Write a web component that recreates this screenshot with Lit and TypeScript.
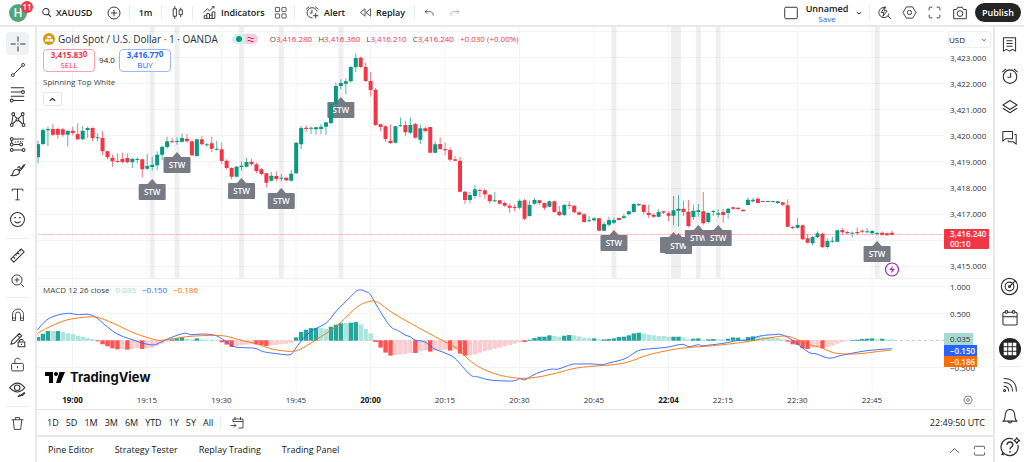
import { LitElement, html, svg, css, nothing } from "lit";
import { customElement, property } from "lit/decorators.js";

/* ---------- icons (28 x 28 grid, line art) ---------- */
const ICONS: Record<string, unknown> = {
  search: svg`<circle cx="12.5" cy="12" r="8" stroke-width="2.6"/><path d="M18.5 18l6.500 7" stroke-width="2.800"/>`,
  plus: svg`<circle cx="14" cy="14" r="10.500"/><path d="M14 8.500v11M8.500 14h11"/>`,
  candles: svg`<path d="M9 2v5M9 21v5M6 7h6v14H6zM20 5v4M20 18v5M17 9h6v9h-6z"/>`,
  indicators: svg`<path d="M4 25v-5h5v-4h5v3h5v-6h5v12zM9 20v5M14 19v6M19 18v7M3 14l7-7 4 4 8-8M19 3h3.500v3.500"/>`,
  grid: svg`<rect x="3" y="3" width="9" height="9" rx="1"/><rect x="17" y="3" width="9" height="9" rx="1"/><rect x="3" y="17" width="9" height="9" rx="1"/><rect x="17" y="17" width="9" height="9" rx="1"/>`,
  alert: svg`<path d="M22.500 12A9.500 9.500 0 1 0 14 24M13 9v6H9M2 8l6-5M19 3l6 5M20 15v10M15 20h10"/>`,
  replay: svg`<path d="M13 6v16L3 14zM25 6v16l-10-8z"/>`,
  undo: svg`<path d="M10 6l-5 5 5 5M5 11h11c5 0 8 3 8 9"/>`,
  redo: svg`<path d="M18 6l5 5-5 5M23 11H12c-5 0-8 3-8 9"/>`,
  frame: svg`<rect x="3" y="4" width="22" height="20" rx="2"/>`,
  down: svg`<path d="M6 11l8 6 8-6" stroke-width="3.500"/>`,
  up: svg`<path d="M4 19l10-9 10 9"/>`,
  fold: svg`<path d="M3 19l11-9 11 9" stroke-width="4.500"/>`,
  quick: svg`<circle cx="13" cy="14" r="9.500" stroke-dasharray="46 14" stroke-dashoffset="-2"/><path d="M20 20l6 6M15 3l-7 11h5l-2 7 8-10h-5z"/>`,
  hex: svg`<path d="M8 3.500h12l6 10.500-6 10.500H8L2 14z"/><circle cx="14" cy="14" r="4"/>`,
  full: svg`<path d="M4 10V6q0-2 2-2h4M18 4h4q2 0 2 2v4M24 18v4q0 2-2 2h-4M10 24H6q-2 0-2-2v-4"/>`,
  camera: svg`<path d="M3 8h5l2-4h8l2 4h5v16H3z"/><circle cx="14" cy="15" r="5"/>`,
  cross: svg`<path d="M14 1v9M14 18v9M1 14h9M18 14h9M13 14h2"/>`,
  trend: svg`<circle cx="5" cy="23" r="2.500"/><circle cx="23" cy="5" r="2.500"/><path d="M7 21L21 7"/>`,
  fib: svg`<path d="M3 3h22M3 10h17M3 17h22M7 24h18"/><circle cx="23" cy="10" r="2.400"/><circle cx="4.500" cy="24" r="2.400"/>`,
  pattern: svg`<path d="M4 23L7 5l7 9 9-9 1 18-10-9z"/><g fill="#fff"><circle cx="4.500" cy="23" r="2.300"/><circle cx="7" cy="5" r="2.300"/><circle cx="14" cy="14" r="2.300"/><circle cx="22.500" cy="5" r="2.300"/><circle cx="24" cy="23" r="2.300"/></g>`,
  forecast: svg`<path d="M7 5h18M7 14h11M7 23h15M4.500 7.500v4"/><path d="M10 10l13-1" stroke-dasharray="2 2"/><g fill="#fff"><circle cx="4.500" cy="5" r="2.300"/><circle cx="4.500" cy="14" r="2.300"/><circle cx="4.500" cy="23" r="2.300"/><circle cx="20" cy="14" r="2.300"/><circle cx="24" cy="23" r="2.300"/></g>`,
  brush: svg`<path d="M3 24c4-1 3-5 5-8 3-4 8-2 9 1 1 5-5 8-14 7zM16 13l2 3c3-2 5-5 9-11M14 12c2-4 4-3 4-1s3 2 6-5"/>`,
  text: svg`<path d="M4 8V4h20v4M14 4v20M10 24h8"/>`,
  smile: svg`<circle cx="14" cy="14" r="11.500"/><path d="M9 17q5 5 10 0"/><path d="M10 10v2M18 10v2" stroke-width="2.500"/>`,
  ruler: svg`<path d="M3 20L20 3l5 5L8 25zM7 16l3 3M11 12l2 2M14 9l3 3M18 5l2 2"/>`,
  zoom: svg`<circle cx="13" cy="13" r="9.500"/><path d="M20 20l6 6M13 8.500v9M8.500 13h9"/>`,
  magnet: svg`<path d="M3 25V13a11 11 0 0 1 22 0v12h-6V13a5 5 0 0 0-10 0v12zM3 20h6M19 20h6"/>`,
  pencilLock: svg`<path d="M3 22l2-6L17 4l4 4L9 20zM14 7l4 4"/><rect x="15" y="18" width="11" height="8"/><path d="M17 18v-2q3.500-4 7 0M20.500 21v2"/>`,
  lock: svg`<rect x="3" y="12" width="22" height="14" rx="2"/><path d="M9 12V7c0-6 8-6 10-2M14 17v4" />`,
  eye: svg`<path d="M1 11q13-15 25 0-12 14-25 0z"/><circle cx="13.500" cy="11" r="4.500"/><path d="M15 26l2-3 3 1zM20 23l5-4 1 1-4 4z"/>`,
  trash: svg`<path d="M3 7h22M10 7V3h8v4M6 7l2 18h12l2-18"/>`,
  list: svg`<path d="M4 3h20v22l-5-3-5 3-5-3-5 3zM9 8h10M9 12.500h10M9 17h10"/>`,
  clock: svg`<circle cx="14" cy="15" r="10.500"/><path d="M15 9v7h-5M2 8l6-5M20 3l6 5"/>`,
  layers: svg`<path d="M14 4l11 7-11 7-11-7zM3 16l11 7 11-7"/>`,
  chat: svg`<path d="M3 4h16v12H8l-5 4zM22 9h3v16l-5-4h-8v-2"/>`,
  radar: svg`<circle cx="14" cy="14" r="12"/><circle cx="14" cy="14" r="6.500"/><path d="M14 14l8-8"/><circle cx="14" cy="14" r="1.500"/>`,
  calendar: svg`<rect x="3" y="5" width="22" height="20" rx="2"/><path d="M3 12h22"/><circle cx="8.500" cy="4.500" r="2" fill="#fff"/><circle cx="19.500" cy="4.500" r="2" fill="#fff"/>`,
  apps: svg`<circle cx="14" cy="14" r="14" fill="#242424" stroke="none"/><path d="M6 6h4.500v4.500H6zM11.750 6h4.500v4.500h-4.500zM17.500 6H22v4.500h-4.500zM6 11.750h4.500v4.500H6zM11.750 11.750h4.500v4.500h-4.500zM17.500 11.750H22v4.500h-4.500zM6 17.500h4.500V22H6zM11.750 17.500h4.500V22h-4.500zM17.500 17.500H22V22h-4.500z" fill="#fff" stroke="none"/>`,
  feed: svg`<circle cx="5.500" cy="22.500" r="1.500"/><path d="M4 16q8 0 8 8M4 10q14 0 14 14M4 4q20 0 20 20"/>`,
  bell: svg`<path d="M3 22c4-2 3-8 4-12 2-8 12-8 14 0 1 4 0 10 4 12zM11 23q3 4 6 0"/>`,
  help: svg`<path d="M25 11a12 12 0 1 1-7-8"/><path d="M2 25l2.500-2.500M3 21.500l2 4"/><path d="M10 11c0-5.500 8-5.500 8 0 0 3-4 3-4 6M14 19.500v2.500" stroke-width="2"/><path d="M23.500 1l1.500 2.500L27.500 5 25 6.500 23.500 9 22 6.500 19.500 5 22 3.500z" fill="#fff"/>`,
  goto: svg`<path d="M6 12V6h20v18h-9M6 11h20M10 2v6M21 2v6M1 19h11M8 15l4 4-4 4"/>`,
  panel: svg`<path d="M3 11V7q0-2 2-2h18q2 0 2 2v4M25 18v4q0 2-2 2H5q-2 0-2-2v-4"/>`,
};

@customElement("tv-icon")
export class TvIcon extends LitElement {
  @property() name = "";
  @property({ type: Number }) size = 16;
  static styles = css`
    :host { display: inline-flex; flex: none; }
    svg { display: block; overflow: visible; }
  `;
  render() {
    return html`<svg width=${this.size} height=${this.size} viewBox="0 0 28 28" fill="none"
      stroke="currentColor" stroke-width="1.700" stroke-linejoin="round" aria-hidden="true">${ICONS[this.name]}</svg>`;
  }
}

/* ---------- chart data ---------- */
// Heights are kept in thirds of a pixel: body top, body bottom, wick top, wick bottom.
type Run = { base: number; bars: string };
const CANDLES: Run[] = [
  { base: 330, bars: `g102,142,92,160 g60,102,55,106 g57,61,50,108 r57,74,42,78 r57,74,53,86 r58,74,54,80 g62,74,62,110
    r62,69,50,76 r72,88,40,90 g62,88,48,90 g54,60,50,84 r54,84,52,94 g82,84,70,94 r84,124,64,136 r124,142,122,148 r143,154,134,170
    r153,155,130,158 r147,156,128,160 r144,157,130,160 g147,157,144,174 g147,150,142,160 r148,178,146,203 g168,176,132,180
    g164,171,140,182 g134,166,124,180 g110,134,108,150 g94,111,80,116 r94,96,84,98 g93,96,82,104 g84,95,70,98 r86,94,72,98
    r94,136,92,138 g88,138,86,140 r88,103,78,106 g103,105,98,110 r100,116,80,126 g116,119,92,122 r118,153,98,162 r152,174,148,178
    r174,200,172,208` },
  { base: 150, bars: `g350,380,348,382 g347,351,335,362 g336,350,324,352 r335,343,326,346 r343,363,338,370 r358,372,354,376
    r370,398,368,412 g377,392,366,394 r378,387,364,394 g383,386,372,394 r383,391,382,394 g371,392,360,394 g278,370,276,372
    g234,283,228,298 r233,237,226,246 g233,236,230,252 g232,238,230,254 g230,237,222,252 g217,230,216,254 g162,219,158,222
    g108,162,98,170 g99,108,88,118 g94,101,86,132 g51,94,48,98 g24,52,10,66 r23,51,20,54 r51,93,38,96 r93,120,66,140
    r119,225,114,228 r223,231,222,244 r229,267,226,276 r272,279,224,282 g229,278,228,280 g226,228,202,230 r225,247,212,258
    g225,248,202,252 r222,263,218,266 g235,269,224,282 r235,243,230,246 r231,308,230,309 g283,308,274,309 r282,297,262,300
    r297,301,278,316 r300,329,292,334 r328,332,318,334 r332,425,320,427` },
  { base: 480, bars: `r95,120,92,132 g105,120,96,130 g88,108,74,116 r90,93,86,112 r91,103,86,116 r104,124,102,132 g121,123,96,126
    r121,131,120,133 r129,137,124,140 r137,143,130,158 r141,143,134,154 g122,143,118,148 r121,176,116,180 g135,168,122,170
    g120,131,114,134 r121,129,120,134 r129,143,128,150 g124,140,122,142 r124,156,122,158 r155,166,138,168 g135,165,132,168
    r134,136,124,148 r137,157,134,160 r157,164,154,166 r163,186,160,188 g181,184,168,186 g175,181,172,184 r175,212,174,214
    g192,212,186,214 g180,194,170,200 g180,188,172,192 r174,180,172,182 g169,174,162,176 g154,163,152,166 g132,156,130,158
    g132,136,130,138 r134,156,134,162 r158,165,134,174 r164,170,160,174 g156,170,148,172 r154,158,152,162` },
  { base: 510, bars: `r130,137,124,154 g121,137,78,166 g116,122,76,170 r116,126,92,138 r125,168,90,172 g122,141,104,150
    g121,126,102,140 r124,160,66,164 g129,156,126,160 g123,126,120,138 g130,134,118,142 r126,135,116,158 g116,129,114,146
    r112,116,110,120 r113,117,112,120 r119,124,118,124 g89,105,82,106 g89,94,84,98 r86,99,82,100 r93,95,92,96 g93,95,92,96
    g93,96,92,97 g94,99,92,102 r97,104,96,108 r106,170,88,172 r171,173,168,178 g165,173,144,176 r166,208,164,210
    r205,218,192,220 g201,220,198,226 g190,202,184,204 r191,231,188,234 g213,231,206,236 g212,215,200,218 g181,215,180,217
    r180,187,174,196 r186,190,182,194 g188,190,184,202 r186,190,172,194 r182,185,178,190 g184,186,174,190 g183,190,180,194
    g189,191,186,196 r188,194,184,198 r190,196,188,197 r188,194,182,196` },
];
// Histogram heights; a trailing "l" marks a fading bar.
const HIST = `11 21 29 29l 29 26l 22l 20l 15l 12l 8l 5l -3 -12 -18 -24 -27 -27l -28 -26l -24l -26 -24l -22l -16l -10l -4l 4 7 10 6l 4l 7
  4l 3l 3l 2l -6 -13 -20 -17l -14l -13l -12l -12 -14 -17 -15l -14l -12l -10l -8l 10 26 33 38 38 38l 36l 42 48 52 53l 54 56 49l 36l 22l
  -5 -22 -37 -46 -44l -42l -41l -38l -38 -33l -30l -34 -31l -30l -28l -31 -28l -40 -46 -45l -42l -37l -33l -29l -25l -22l -18l -14l
  -10l -6l -5 3 8 12 12 16 14l 12l 15 17 16l 13l 9l 8l 7 4l 4 5 7 11 12 16 22 24 22l 18l 16l 14l 14l 12l 12 12 10l 4l 6 7 3l 4 5 4l
  4l 6 10 9 5l 11 13 12l 12l 11l 10l 8l 4l -4 -12 -14 -24 -26 -22l -20l -24 -20l -16l -10l -5l -2l 2 3 5 6 7 4l 6 4l 4l`;
const MACD = `112,990 140,960 170,946 205,940 235,944 265,943 288,952 315,975 345,998 370,1010 400,1020 430,1030 460,1035 480,1028
  505,1016 540,1003 558,1000 575,1004 610,1002 645,1006 665,1016 700,1039 730,1043 765,1045 790,1055 830,1061 870,1064 885,1048
  910,1015 940,990 980,968 1010,932 1050,892 1075,870 1100,876 1112,885 1135,925 1170,978 1195,992 1215,1005 1230,1010 1245,1020
  1275,1026 1300,1045 1335,1059 1365,1075 1410,1124 1435,1131 1470,1140 1520,1143 1545,1142 1560,1136 1575,1139 1610,1120
  1650,1108 1675,1107 1715,1093 1740,1092 1780,1092 1805,1094 1830,1088 1875,1076 1915,1052 1955,1046 2000,1042 2045,1033
  2068,1040 2095,1034 2110,1037 2170,1030 2210,1022 2240,1020 2280,1008 2320,1004 2345,1004 2380,1022 2425,1056 2450,1062
  2475,1072 2495,1074 2525,1066 2565,1058 2610,1051 2675,1046`;
const SIGNAL = `112,1000 150,980 200,960 260,951 295,953 340,970 400,998 450,1015 480,1021 520,1016 570,1009 640,1006 680,1009
  720,1020 770,1032 820,1048 870,1054 900,1048 950,1018 1010,978 1070,922 1110,904 1135,908 1180,940 1250,980 1320,1018
  1370,1045 1420,1090 1470,1116 1520,1130 1570,1135 1620,1130 1670,1119 1730,1104 1800,1097 1840,1094 1885,1086 1940,1066
  2000,1052 2060,1043 2140,1037 2220,1028 2300,1015 2355,1008 2390,1018 2430,1035 2460,1042 2500,1058 2540,1062 2580,1061
  2630,1055 2675,1050`;
// Pattern markers: bar index and top of the label.
const MARKS = [[23, 184], [28, 157], [41, 183], [49, 193], [61, 102], [116, 235], [128, 237], [129, 238], [133, 230], [137, 230], [169, 246]];

const barX = (i: number) => 38 + 4.965 * i;
const GRID_X = [72.5, 147, 221.5, 296, 370.5, 445, 519.5, 594, 668.5, 723, 797.5, 872];
const TIMES = ["19:00", "19:15", "19:30", "19:45", "20:00", "20:15", "20:30", "20:45", "22:04", "22:15", "22:30", "22:45"];
const STRONG = new Set(["19:00", "20:00", "22:04"]);
const PRICES = [3423, 3422, 3421, 3420, 3419, 3418, 3417, 3416, 3415];
const priceY = (p: number) => 57.5 + (3423 - p) * 26.1;

function curve(points: string) {
  const p = points.trim().split(/\s+/).map((s) => s.split(",").map((n) => +n / 3));
  let d = `M${p[0]}`;
  for (let i = 0; i < p.length - 1; i++) {
    const a = p[i - 1] ?? p[i], b = p[i], c = p[i + 1], e = p[i + 2] ?? c;
    d += `C${b[0] + (c[0] - a[0]) / 6},${b[1] + (c[1] - a[1]) / 6} ${c[0] - (e[0] - b[0]) / 6},${c[1] - (e[1] - b[1]) / 6} ${c}`;
  }
  return d;
}

@customElement("tv-chart")
export class TvChart extends LitElement {
  static styles = css`
    :host { display: flex; justify-content: flex-end; overflow: hidden; background: #fff; }
    svg { flex: none; display: block; overflow: visible; }
    text { font-family: "Open Sans", sans-serif; font-size: 8px; fill: #2f3239; }
    .grid { stroke: #f4f4f7; }
    .band { fill: #787b86; opacity: 0.12; }
    .g { fill: #089981; stroke: #089981; }
    .r { fill: #f23645; stroke: #f23645; }
    .wick { stroke-width: 0.7; }
    .body { stroke: none; }
    .mark { fill: #787b86; }
    .stw { font-size: 8px; font-weight: 600; fill: #fff; text-anchor: middle; }
    .time { text-anchor: middle; }
    .strong { font-weight: 700; fill: #131722; }
    .onTag { fill: #fff; font-weight: 600; }
    .macd { fill: none; stroke: #2962ff; stroke-width: 0.9; }
    .signal { fill: none; stroke: #ff6d00; stroke-width: 0.9; }
  `;

  private candles() {
    let i = 0;
    return CANDLES.flatMap(({ base, bars }) => bars.trim().split(/\s+/).map((s) => {
      const [t, b, wt, wb] = s.slice(1).split(",").map((n) => (+n + base) / 3);
      const x = barX(i++);
      return svg`<g class=${s[0]}><path class="wick" d="M${x} ${wt}V${wb}"/>
        <rect class="body" x=${x - 2} y=${t} width="4" height=${Math.max(1, b - t)} rx="0.500"/></g>`;
    }));
  }

  private histogram() {
    return HIST.trim().split(/\s+/).map((s, i) => {
      const h = parseInt(s) / 3, soft = s.endsWith("l");
      const fill = h > 0 ? (soft ? "#ace5dc" : "#26a69a") : soft ? "#fccbcd" : "#ff5252";
      return svg`<rect x=${barX(i) - 2.2} y=${h > 0 ? 340.7 - h : 340.3} width="4.400" height=${Math.abs(h)} fill=${fill}/>`;
    });
  }

  render() {
    return html`<svg width="956" height="382" viewBox="37 27 956 382" role="img" aria-label="XAUUSD one minute chart with MACD">
      ${GRID_X.map((x) => svg`<path class="grid" d="M${x} 27V391"/>`)}
      ${[31.5, ...PRICES.map(priceY)].map((y) => svg`<path class="grid" d="M-3000 ${Math.floor(y) + 0.5}H944"/>`)}
      ${[286.5, 313.5, 367.5].map((y) => svg`<path class="grid" d="M-3000 ${y}H944"/>`)}
      ${MARKS.map(([i]) => svg`<rect class="band" x=${barX(i) - 2.5} y="27" width="5" height="251"/>`)}
      <path d="M-3000 278.500H993" stroke="#eeeff1"/>
      ${MARKS.map(([i, y]) => svg`<path class="mark" d="M${barX(i)} ${y - 5}l5 5.500h-10z"/>
        <rect class="mark" x=${barX(i) - 13.5} y=${y} width="27" height="16" rx="1"/>
        <text class="stw" x=${barX(i)} y=${y + 11}>STW</text>`)}
      <path d="M-3000 234.500H944" stroke="#f23645" stroke-opacity="0.400" stroke-dasharray="1 1"/>
      ${this.candles()}
      <path d="M-3000 340.500H944" stroke="#b4b6bd" stroke-width="0.700" stroke-dasharray="3 3"/>
      ${this.histogram()}
      <path class="macd" d=${curve(MACD)}/>
      <path class="signal" d=${curve(SIGNAL)}/>
      <circle cx="892" cy="269.500" r="6.500" fill="#fff" stroke="#9c27b0" stroke-width="1.200"/>
      <path d="M893.500 265.500l-4.500 4.500h3l-1.500 3.500 4.500-4.500h-3z" fill="#9c27b0"/>
      ${PRICES.filter((p) => p !== 3416).map((p) => svg`<text x="950" y=${Math.round(priceY(p)) + 3}>${p.toLocaleString("en-US")}.000</text>`)}
      <text x="950" y="290">1.000</text><text x="950" y="317">0.500</text><text x="950" y="371">−0.500</text>
      <rect x="944" y="229" width="45" height="20" rx="1" fill="#f23645"/>
      <text class="onTag" x="950" y="237">3,416.240</text><text class="onTag" x="950" y="247">00:10</text>
      <rect x="944" y="333" width="29" height="12" fill="#a8d9d0"/><text x="950" y="342">0.035</text>
      <rect x="944" y="345" width="33" height="11" fill="#2962ff"/><text class="onTag" x="950" y="354">−0.150</text>
      <rect x="944" y="356" width="33" height="11" fill="#ff6d00"/><text class="onTag" x="950" y="365">−0.186</text>
      ${TIMES.map((t, i) => svg`<text class="time ${STRONG.has(t) ? "strong" : ""}" x=${GRID_X[i]} y="403">${t}</text>`)}
    </svg>`;
  }
}

@customElement("app-root")
export class AppRoot extends LitElement {
  static styles = css`
    :host {
      display: grid; grid-template: 25px 1fr / 35px minmax(0, 1fr) 29px; gap: 2px;
      min-height: 100vh; box-sizing: border-box; background: #e7e8eb;
      font: 9px/12px "Open Sans", sans-serif; color: #131722;
    }
    * { box-sizing: border-box; }
    button { font: inherit; color: inherit; background: none; border: 0; padding: 0; margin: 0; cursor: pointer;
      display: flex; align-items: center; justify-content: center; white-space: nowrap; }
    tv-icon { color: #2f3239; }
    .top { grid-column: 1 / -1; background: #fff; display: flex; justify-content: space-between; font-weight: 600; }
    .tools { display: grid; align-items: center;
      grid-template-columns: 40px 58px 31px 1px 31px 1px 30px 1px 74px 27px 1px 57px 62px 1px 27px 25px; }
    .vr { background: #ebecef; height: 15px; width: 1px; }
    .start { justify-content: flex-start; gap: 4px; padding-left: 1px; }
    .indicators { padding-left: 9px; }
    .alert { padding-left: 10px; }
    .replay { padding-left: 7px; }
    .avatar { position: relative; width: 18px; height: 18px; margin-left: 9px; border-radius: 9px; background: #56a37a; color: #fff; font-size: 12px; }
    .badge { position: absolute; left: 12px; top: -3px; width: 12px; height: 12px; border-radius: 6px; background: #f23645; font-size: 8px; line-height: 12px; text-align: center; }
    .faded { opacity: 0.5; }
    .actions { display: flex; align-items: center; gap: 10px; padding-right: 3px; }
    .actions .vr { margin: 0 -3px 0 -4px; }
    .layout { display: flex; gap: 8px; margin-right: -2px; }
    .name { display: flex; flex-direction: column; line-height: 12px; width: 40px; align-items: center; }
    .save { color: #2962ff; font-size: 8px; line-height: 8px; font-weight: 400; }
    .publish { background: #242424; color: #fff; height: 19px; width: 46px; border-radius: 10px; margin-left: -3px; }

    .left { background: #fff; display: flex; flex-direction: column; padding: 5px 5px 0; align-items: center; }
    .left button { width: 23px; height: 25px; }
    .left .active { background: #f0f1f3; border-radius: 4px; height: 23px; margin: 0 0 2px; }
    .hr { width: 24px; height: 1px; background: #ebecef; margin: 4px 0; flex: none; }
    .group { padding-bottom: 2px; }

    .centre { display: flex; flex-direction: column; gap: 2px; min-width: 0; }
    .main { background: #fff; flex: 1; display: flex; flex-direction: column; }
    .stage { position: relative; flex: 1; }
    .legend { position: absolute; left: 6px; top: 6px; right: 50px; display: flex; flex-direction: column; align-items: flex-start; gap: 3px; }
    .title { display: flex; align-items: center; height: 12px; font-size: 10px; white-space: nowrap; }
    .title h1 { font-size: 10px; line-height: 12px; font-weight: 500; margin: 0 14px 0 3px; color: #2a2e39; }
    .status { display: flex; width: 26px; height: 10px; border-radius: 5px; overflow: hidden; margin-right: 12px; }
    .ohlc { display: flex; gap: 6px; font-size: 8px; color: #f23645; }
    .ohlc b { font-weight: 400; color: #4a4d57; }
    .trade { display: flex; align-items: center; height: 24px; }
    .order { flex-direction: column; width: 52px; height: 23px; border: 1px solid; border-radius: 4px; background: #fff; font-size: 8px; line-height: 10px; }
    .order b { font-weight: 700; }
    .order sup { font-size: 8px; line-height: 0; vertical-align: 1px; }
    .sell { color: #f23645; border-color: #f8a3aa; }
    .buy { color: #2962ff; border-color: #9db8ff; }
    .spread { width: 24px; text-align: center; font-size: 8px; }
    .study { font-size: 8px; line-height: 14px; color: #3c3f47; }
    .fold { width: 19px; height: 14px; border: 1px solid #e6e7ea; border-radius: 2px; background: #fff; }
    .macd { position: absolute; left: 6px; top: 257px; display: flex; gap: 6px; font-size: 8px; color: #3c3f47; }
    .teal { color: #a3d9d1; } .blue { color: #2962ff; } .orange { color: #ff6d00; }
    .brand { position: absolute; left: 8px; top: 342px; display: flex; align-items: center; gap: 5px; font: 700 13px/16px Inter, sans-serif; color: #0c0e14; }
    .unit { position: absolute; right: 2px; top: 4px; width: 43px; height: 17px; border: 1px solid #efeff2; border-radius: 3px; background: #fff; display: flex; align-items: center; justify-content: space-between; padding-right: 3px; }
    .unit select { appearance: none; border: 0; background: none; font: 8px/12px "Open Sans", sans-serif; color: #131722; padding: 0; width: 30px; }
    .axisSettings { position: absolute; right: 20px; top: 368px; }
    .ranges { display: flex; align-items: center; height: 26px; border-top: 1px solid #e6e7ea; padding: 0 8px 0 10px; }
    .ranges nav { display: flex; gap: 7px; padding-right: 7px; }
    .ranges .goto { margin-left: 9px; }
    .clock { margin-left: auto; }
    .tabs { background: #fff; height: 25px; display: flex; align-items: center; gap: 21px; padding: 1px 7px 0 11px; font-weight: 500; }
    .tabs .end { margin-left: auto; display: flex; gap: 12px; }

    .right { background: #fff; display: flex; flex-direction: column; align-items: center; padding-top: 2px; }
    .right button { width: 29px; height: 31px; flex: none; }
    .right .hr { margin: 2px 0; }
    .space { flex: 1; }
  `;

  private tool(name: string, label: string, size = 16, cls = "") {
    return html`<button class=${cls || nothing} aria-label=${label}><tv-icon name=${name} .size=${size}></tv-icon></button>`;
  }

  render() {
    return html`
      <header class="top">
        <div class="tools">
          <button class="avatar" aria-label="Account">H<span class="badge">11</span></button>
          <button class="start"><tv-icon name="search" .size=${11}></tv-icon>XAUUSD</button>
          ${this.tool("plus", "Compare", 16)}
          <span class="vr"></span>
          <button>1m</button>
          <span class="vr"></span>
          ${this.tool("candles", "Bar style", 15)}
          <span class="vr"></span>
          <button class="start indicators"><tv-icon name="indicators" .size=${15}></tv-icon>Indicators</button>
          ${this.tool("grid", "Templates", 13)}
          <span class="vr"></span>
          <button class="start alert"><tv-icon name="alert" .size=${15}></tv-icon>Alert</button>
          <button class="start replay"><tv-icon name="replay" .size=${13}></tv-icon>Replay</button>
          <span class="vr"></span>
          ${this.tool("undo", "Undo", 12)}
          ${this.tool("redo", "Redo", 12, "faded")}
        </div>
        <div class="actions">
          <button class="layout"><tv-icon name="frame" .size=${16}></tv-icon>
            <span class="name"><span>Unnamed</span><span class="save">Save</span></span></button>
          ${this.tool("down", "Layouts", 8)}
          <span class="vr"></span>
          ${this.tool("quick", "Quick search", 15)}
          ${this.tool("hex", "Settings", 15)}
          ${this.tool("full", "Fullscreen", 15)}
          ${this.tool("camera", "Snapshot", 16)}
          <button class="publish">Publish</button>
        </div>
      </header>

      <aside class="left">
        <div class="group">
          ${this.tool("cross", "Cross", 16, "active")}
          ${this.tool("trend", "Trend line")} ${this.tool("fib", "Fibonacci", 17)} ${this.tool("pattern", "Patterns", 17)}
          ${this.tool("forecast", "Forecasting", 17)} ${this.tool("brush", "Brush", 17)} ${this.tool("text", "Text", 15)}
          ${this.tool("smile", "Icons", 17)}
        </div>
        <span class="hr"></span>
        ${this.tool("ruler", "Measure", 17)} ${this.tool("zoom", "Zoom in", 15)}
        <span class="hr"></span>
        ${this.tool("magnet", "Magnet", 14)} ${this.tool("pencilLock", "Stay in drawing mode", 17)}
        ${this.tool("lock", "Lock drawings", 15)} ${this.tool("eye", "Hide drawings", 17)}
        <span class="hr"></span>
        ${this.tool("trash", "Remove", 15)}
      </aside>

      <div class="centre">
        <main class="main">
          <div class="stage">
            <tv-chart></tv-chart>
            <div class="legend">
              <div class="title">
                <svg width="12" height="12" viewBox="0 0 12 12" aria-hidden="true"><circle cx="6" cy="6" r="6" fill="#d79a12"/>
                  <path d="M4.500 3h3l.7 2.300H3.800zM2.500 6h3l.6 2.600H1.900zM6.700 6h3l.6 2.600H6.200z" fill="#fff"/></svg>
                <h1>Gold Spot / U.S. Dollar · 1 · OANDA</h1>
                <svg class="status" viewBox="0 0 26 10" aria-hidden="true"><path d="M0 0h13v10H0z" fill="#d5eeea"/><path d="M13 0h13v10H13z" fill="#f9cfe0"/>
                  <circle cx="7" cy="5" r="3" fill="#089981"/><path d="M15.500 4q1.500-1.500 3 0t3 0M15.500 7q1.500-1.500 3 0t3 0" fill="none" stroke="#d81b60"/></svg>
                <div class="ohlc"><span><b>O</b>3,416.280</span><span><b>H</b>3,416.360</span><span><b>L</b>3,416.210</span><span><b>C</b>3,416.240</span><span>+0.030 (+0.00%)</span></div>
              </div>
              <div class="trade">
                <button class="order sell"><b>3,415.83<sup>0</sup></b><span>SELL</span></button>
                <span class="spread">94.0</span>
                <button class="order buy"><b>3,416.77<sup>0</sup></b><span>BUY</span></button>
              </div>
              <span class="study">Spinning Top White</span>
              ${this.tool("fold", "Collapse legend", 7, "fold")}
            </div>
            <div class="macd"><span>MACD 12 26 close</span><span class="teal">0.035</span><span class="blue">−0.150</span><span class="orange">−0.186</span></div>
            <div class="brand"><svg width="20" height="11" viewBox="0 0 20 11" aria-hidden="true"><path d="M0 0h8v11H4V4H0zM14.500 0H20l-4.600 11H11z"/><circle cx="11" cy="2" r="2"/></svg>TradingView</div>
            <label class="unit"><select aria-label="Currency"><option>USD</option></select><tv-icon name="down" .size=${6}></tv-icon></label>
            ${this.tool("hex", "Axis settings", 10, "axisSettings")}
          </div>
          <div class="ranges">
            <nav>${["1D", "5D", "1M", "3M", "6M", "YTD", "1Y", "5Y", "All"].map((r) => html`<button>${r}</button>`)}</nav>
            <span class="vr"></span>
            ${this.tool("goto", "Go to date", 14, "goto")}
            <button class="clock">22:49:50 UTC</button>
          </div>
        </main>
        <footer class="tabs">
          <button>Pine Editor</button><button>Strategy Tester</button><button>Replay Trading</button><button>Trading Panel</button>
          <span class="end">${this.tool("up", "Expand panel", 13)}${this.tool("panel", "Maximise panel", 13)}</span>
        </footer>
      </div>

      <aside class="right">
        ${this.tool("list", "Watchlist", 17)} ${this.tool("clock", "Alerts", 18)} ${this.tool("layers", "Object tree", 18)} ${this.tool("chat", "Chats", 17)}
        <span class="space"></span>
        ${this.tool("radar", "Screener", 19)} ${this.tool("calendar", "Calendar", 18)} ${this.tool("apps", "Products", 22)}
        <span class="hr"></span>
        ${this.tool("feed", "Streams", 18)} ${this.tool("bell", "Notifications", 18)} ${this.tool("help", "Help", 20)}
      </aside>
    `;
  }
}
